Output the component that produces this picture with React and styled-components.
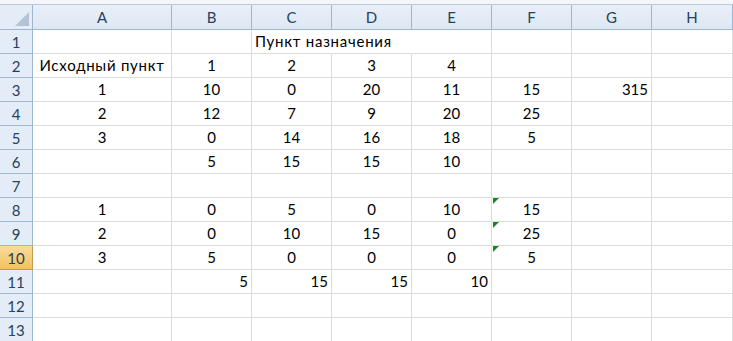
import React from 'react';
import styled, { createGlobalStyle } from 'styled-components';

const Global = createGlobalStyle`
  html, body { margin: 0; padding: 0; background: #fff; }
  body { font-family: Lato, "Open Sans", "Noto Sans", sans-serif; }
`;

const Sheet = styled.div`
  width: 733px;
  height: 341px;
  overflow: hidden;
  background: #fff;
  border-top: 4px solid #f4f6f9;
  box-sizing: border-box;
`;

const Grid = styled.div`
  display: grid;
  grid-template-columns: 33px 139px repeat(6, 80px) 81px;
  grid-template-rows: 25px repeat(13, 24px);
  border-top: 1px solid #b9c9da;
`;

const Corner = styled.div`
  position: relative;
  background: #e4ecf7;
  border-right: 1px solid #9eb6ce;
  border-bottom: 1px solid #9eb6ce;
  &::after {
    content: '';
    position: absolute;
    right: 3px;
    bottom: 3px;
    border-left: 14px solid transparent;
    border-bottom: 14px solid #b6c3d3;
  }
`;

const ColHead = styled.div`
  display: flex;
  align-items: center;
  justify-content: center;
  background: linear-gradient(#e9eff8, #dde7f3);
  border-right: 1px solid #9eb6ce;
  border-bottom: 1px solid #9eb6ce;
  color: #27415f;
  font-size: 15px;
`;

const RowHead = styled.div`
  display: flex;
  align-items: center;
  justify-content: center;
  background: ${({ active }) => (active ? 'linear-gradient(#f9dc9c, #f1c15f)' : '#e4ecf7')};
  border-right: 1px solid ${({ active }) => (active ? '#c29b4d' : '#9eb6ce')};
  border-bottom: 1px solid ${({ active }) => (active ? '#c29b4d' : '#9eb6ce')};
  color: #27415f;
  font-size: 15px;
`;

const Cell = styled.div`
  position: relative;
  display: flex;
  align-items: flex-end;
  padding: 0 3px 3px;
  justify-content: ${({ align }) =>
    align === 'left' ? 'flex-start' : align === 'right' ? 'flex-end' : 'center'};
  border-right: 1px solid ${({ spill }) => (spill ? 'transparent' : '#dadcdd')};
  border-bottom: 1px solid #dadcdd;
  font-size: 15px;
  letter-spacing: ${({ wide }) => (wide ? '0.75px' : 'normal')};
  color: #000;
  white-space: nowrap;
  overflow: visible;
  z-index: ${({ spill }) => (spill ? 1 : 0)};
`;

const Flag = styled.span`
  position: absolute;
  left: 1px;
  top: 0;
  width: 0;
  height: 0;
  border-top: 6px solid #138a1a;
  border-right: 6px solid transparent;
`;

const cols = ['A', 'B', 'C', 'D', 'E', 'F', 'G', 'H'];

// each row: [A..H], a cell is a string or {v, align, spill, flag, wide}
const rows = [
  ['', '', { v: 'Пункт назначения', align: 'left', spill: true, wide: true }, { v: '', spill: true }, '', '', '', ''],
  [{ v: 'Исходный пункт', wide: true }, '1', '2', '3', '4', '', '', ''],
  ['1', '10', '0', '20', '11', '15', { v: '315', align: 'right' }, ''],
  ['2', '12', '7', '9', '20', '25', '', ''],
  ['3', '0', '14', '16', '18', '5', '', ''],
  ['', '5', '15', '15', '10', '', '', ''],
  ['', '', '', '', '', '', '', ''],
  ['1', '0', '5', '0', '10', { v: '15', flag: true }, '', ''],
  ['2', '0', '10', '15', '0', { v: '25', flag: true }, '', ''],
  ['3', '5', '0', '0', '0', { v: '5', flag: true }, '', ''],
  ['', { v: '5', align: 'right' }, { v: '15', align: 'right' }, { v: '15', align: 'right' }, { v: '10', align: 'right' }, '', '', ''],
  ['', '', '', '', '', '', '', ''],
  ['', '', '', '', '', '', '', ''],
];

export default function App() {
  return (
    <>
      <Global />
      <Sheet>
        <Grid>
          <Corner />
          {cols.map((c) => (
            <ColHead key={c}>{c}</ColHead>
          ))}
          {rows.map((row, i) => (
            <React.Fragment key={i}>
              <RowHead active={i === 9}>{i + 1}</RowHead>
              {row.map((cell, j) => {
                const c = typeof cell === 'string' ? { v: cell } : cell;
                return (
                  <Cell key={j} align={c.align} spill={c.spill} wide={c.wide}>
                    {c.flag && <Flag />}
                    {c.v}
                  </Cell>
                );
              })}
            </React.Fragment>
          ))}
        </Grid>
      </Sheet>
    </>
  );
}
